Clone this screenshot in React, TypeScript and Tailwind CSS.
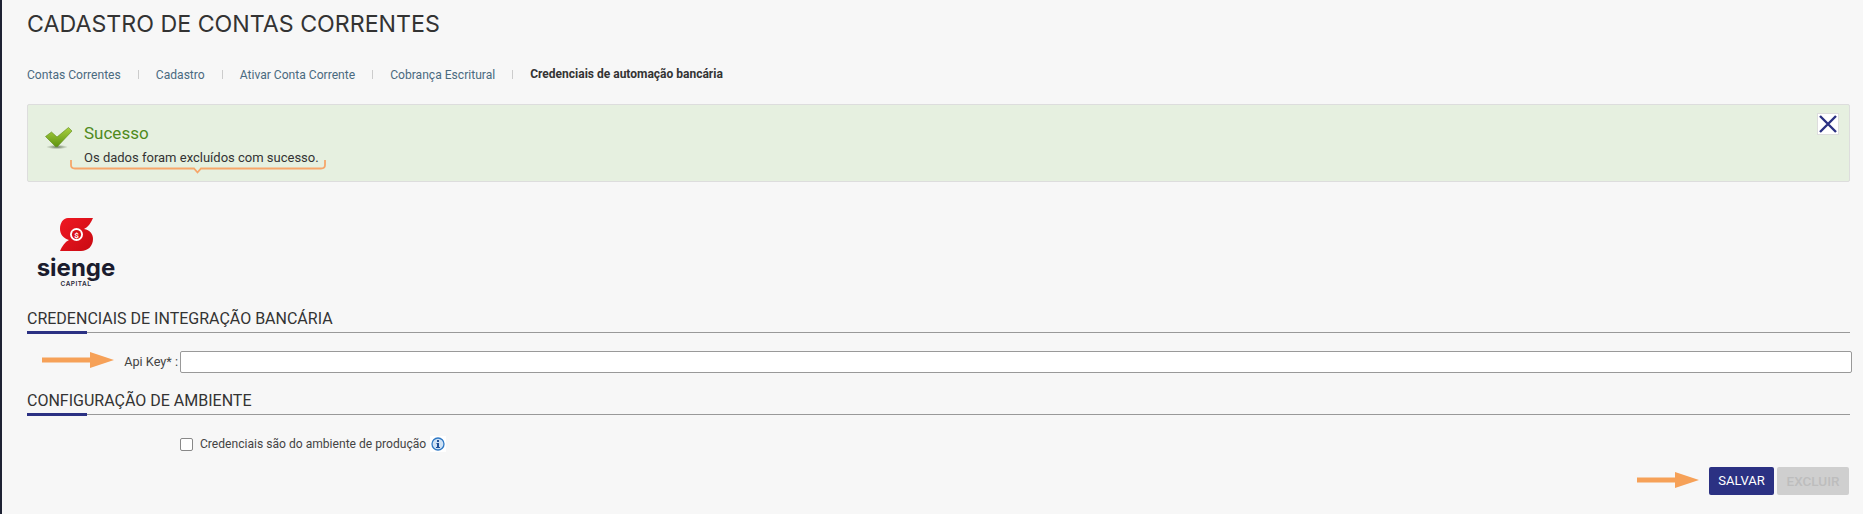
const tabs = ['Contas Correntes', 'Cadastro', 'Ativar Conta Corrente', 'Cobrança Escritural'];

// seta laranja das anotações do print
function Arrow({ className, width }: { className: string; width: number }) {
  const head = width - 24;
  return (
    <svg className={className} width={width} height="16" viewBox={`0 0 ${width} 16`}>
      <path d={`M0 5.5 L${head} 5.5 L${head} 0 L${width} 8 L${head} 16 L${head} 10.5 L0 10.5 Z`} fill="#f6a158" />
    </svg>
  );
}

function CheckIcon() {
  return (
    <svg width="28" height="23" viewBox="0 0 28 23" className="shrink-0">
      <defs>
        <linearGradient id="chk" x1="0" y1="0" x2="0" y2="1">
          <stop offset="0" stopColor="#a9d040" />
          <stop offset="1" stopColor="#5f9410" />
        </linearGradient>
        <radialGradient id="shadow">
          <stop offset="0" stopColor="#6b7a60" />
          <stop offset="1" stopColor="#e6f0e0" />
        </radialGradient>
      </defs>
      <ellipse cx="12" cy="20" rx="11" ry="2.2" fill="url(#shadow)" />
      <path d="M0.5 9.5 L6.5 5 L12 10 L23.5 0.5 L27 4 L12.5 19.5 L10.5 19.5 Z" fill="url(#chk)" stroke="#5d8a1a" strokeWidth="0.6" />
    </svg>
  );
}

function SiengeLogo() {
  return (
    <div className="flex w-[76px] flex-col items-center">
      <svg width="33" height="33" viewBox="0 0 33 33">
        <defs>
          <linearGradient id="sg" x1="0" y1="0" x2="1" y2="1">
            <stop offset="0" stopColor="#f01822" />
            <stop offset="1" stopColor="#c80a12" />
          </linearGradient>
        </defs>
        <path d="M8 0 H33 C31 5 28 9 24 11 C30 12 33 16 33 21 C33 28 28 33 21 33 H0 C2 28 5 24 9 22 C3 20 0 16 0 11 C0 5 3 0 8 0 Z" fill="url(#sg)" />
        <circle cx="16.5" cy="16.5" r="6.5" fill="#fff" />
        <circle cx="16.5" cy="16.5" r="4.6" fill="#d9101a" />
        <text x="16.5" y="19.5" textAnchor="middle" fontSize="8" fontWeight="700" fill="#fff" fontFamily="Roboto, sans-serif">$</text>
      </svg>
      <span className="mt-[3px] text-[24px] leading-[27px] font-bold whitespace-nowrap text-[#1b1c2e] font-['Inter',sans-serif]">sienge</span>
      <span className="mt-[-1px] text-[6.5px] leading-[8px] font-semibold tracking-[0.5px] text-[#2a2a3a] font-['Inter',sans-serif]">CAPITAL</span>
    </div>
  );
}

function InfoBadge() {
  return (
    <span className="ml-[4px] flex h-[16px] w-[16px] items-center justify-center bg-white">
      <svg width="14" height="14" viewBox="0 0 14 14">
        <circle cx="7" cy="7" r="6" fill="#cfe2f5" stroke="#2f78c4" strokeWidth="1.3" />
        <rect x="6" y="3" width="2" height="2" fill="#1f4f96" />
        <path d="M5.5 6 H8 V10 H9 V11 H5 V10 H6 V7 H5.5 Z" fill="#1f4f96" />
      </svg>
    </span>
  );
}

function SectionTitle({ children }: { children: string }) {
  return (
    <div className="relative h-[27px] border-b border-[#999]">
      <h2 className="text-[16px] leading-[26px] font-normal text-[#333]">{children}</h2>
      <div className="absolute bottom-[-2px] left-0 h-[3px] w-[60px] bg-[#2b3183]" />
    </div>
  );
}

export default function App() {
  return (
    <div className="relative h-[514px] w-[1863px] overflow-hidden border-l-2 border-[#1e2233] bg-[#f7f7f7] pl-[25px] pr-[13px] font-['Roboto',sans-serif] text-[#444]">
      <h1 className="pt-[11px] text-[23.2px] leading-[26px] font-normal text-[#333] font-['Inter',sans-serif]">CADASTRO DE CONTAS CORRENTES</h1>

      <nav className="mt-[28px] flex h-[20px] items-center text-[12.1px] text-[#4a6a80]">
        {tabs.map((t) => (
          <div key={t} className="flex items-center">
            <a>{t}</a>
            <span className="mx-[17px] h-[9px] w-px bg-[#ccc]" />
          </div>
        ))}
        <a className="mb-[3px] text-[12px] font-bold text-[#333]">Credenciais de automação bancária</a>
      </nav>

      <div className="relative mt-[19px] flex h-[78px] rounded-[2px] border border-[#ddd] bg-[#e6f0e0] pl-[17px] pt-[17px]">
        <div className="pt-[5px]"><CheckIcon /></div>
        <div className="ml-[11px]">
          <h3 className="text-[17px] leading-[22px] font-normal text-[#4f8a1c]">Sucesso</h3>
          <p className="mt-[6px] text-[13px] leading-[16px] text-[#333]">Os dados foram excluídos com sucesso.</p>
        </div>
        <button className="absolute right-[10px] top-[8px] flex h-[22px] w-[22px] items-center justify-center border border-[#ddd] bg-white">
          <svg width="18" height="18" viewBox="0 0 18 18">
            <path d="M1 1 L17 17 M17 1 L1 17" stroke="#2b3183" strokeWidth="2.4" />
          </svg>
        </button>
      </div>

      <div className="mt-[36px] pl-[11px]"><SiengeLogo /></div>

      <div className="mt-[18px]"><SectionTitle>CREDENCIAIS DE INTEGRAÇÃO BANCÁRIA</SectionTitle></div>

      <div className="mt-[18px] flex items-center">
        <label className="w-[153px] shrink-0 pr-[2px] text-right text-[12.7px]">Api Key* :</label>
        <input className="h-[22px] w-[1672px] shrink-0 rounded-[2px] border border-[#999] bg-white" />
      </div>

      <div className="mt-[15px]"><SectionTitle>CONFIGURAÇÃO DE AMBIENTE</SectionTitle></div>

      <div className="mt-[20px] flex items-center pl-[153px]">
        <span className="h-[13px] w-[13px] rounded-[2px] border border-[#888] bg-white" />
        <span className="ml-[7px] text-[12.1px]">Credenciais são do ambiente de produção</span>
        <InfoBadge />
      </div>

      <div className="mt-[14px] mr-[1px] flex justify-end gap-[3px]">
        <button className="h-[28px] w-[65px] rounded-[2px] bg-[#2b3183] text-[13px] font-normal text-white">SALVAR</button>
        <button className="h-[28px] w-[72px] rounded-[2px] bg-[#cfcfcf] text-[13.5px] font-medium text-[#bdbdbd]">EXCLUIR</button>
      </div>

      {/* anotações por cima do print */}
      <svg className="absolute left-[67px] top-[159px]" width="260" height="16" viewBox="0 0 260 16" fill="none">
        <path d="M2 1 V6 Q2 9.5 6 9.5 H125 L128.5 13.5 L132 9.5 H252 Q256 9.5 256 6 V1" stroke="#f6a66a" strokeWidth="1.8" />
      </svg>
      <Arrow width={72} className="absolute left-[40px] top-[352px]" />
      <Arrow width={62} className="absolute left-[1635px] top-[472px]" />
    </div>
  );
}
